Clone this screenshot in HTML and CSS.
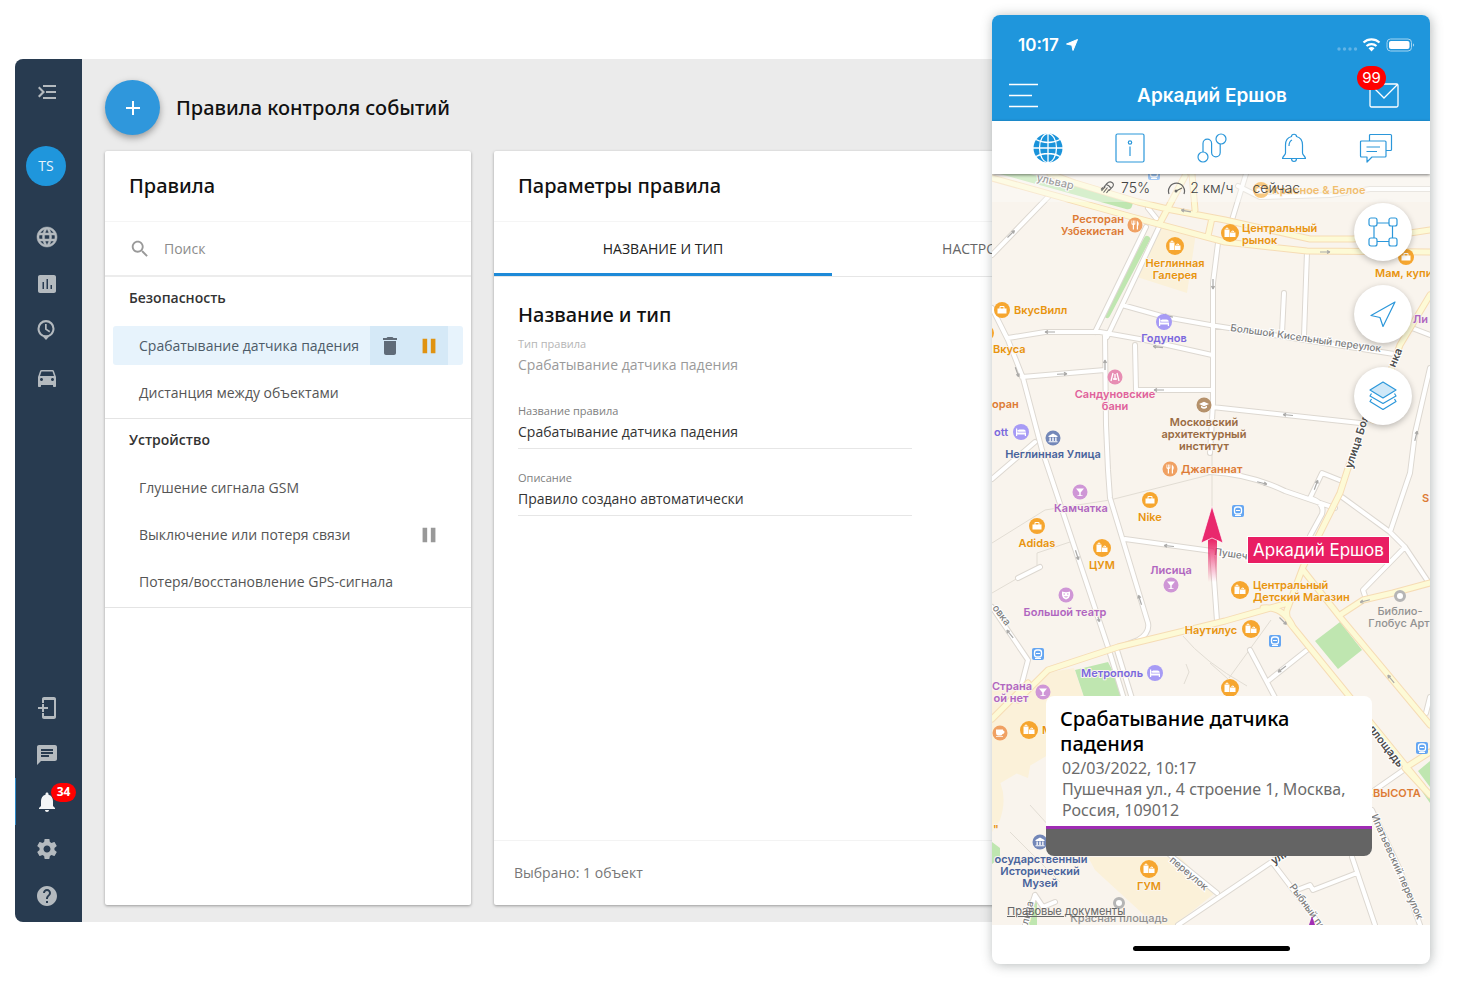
FILE: index.html
```html
<!DOCTYPE html>
<html lang="ru">
<head>
<meta charset="utf-8">
<meta name="viewport" content="width=device-width, initial-scale=1">
<title>Правила контроля событий</title>
<link rel="stylesheet" href="styles.css">
</head>
<body>
<div class="stage">
  <div class="window">
    <nav class="sidebar" aria-label="Главное меню">
      <button class="side-btn" aria-label="Развернуть меню"><svg viewBox="0 0 24 24"><path d="M8 5h13v2H8zM11 11h10v2H11zM8 17h13v2H8zM3 8l1.500-1.500L10 12l-5.500 5.500L3 16l4-4z"/></svg></button>
      <button class="avatar">TS</button>
      <button class="side-btn" aria-label="Карта"><svg viewBox="0 0 24 24"><path stroke="currentColor" stroke-width=".5" d="M11.990 2C6.470 2 2 6.480 2 12s4.470 10 9.990 10C17.520 22 22 17.520 22 12S17.520 2 11.990 2zm6.930 6h-2.950c-.32-1.250-.78-2.450-1.380-3.560 1.840.63 3.370 1.910 4.330 3.560zM12 4.040c.83 1.200 1.480 2.530 1.910 3.960h-3.820c.43-1.430 1.080-2.760 1.910-3.960zM4.260 14C4.100 13.360 4 12.690 4 12s.1-1.360.26-2h3.380c-.08.66-.14 1.320-.14 2s.06 1.340.14 2H4.260zm.82 2h2.950c.32 1.250.78 2.450 1.380 3.560-1.840-.63-3.370-1.900-4.330-3.560zm2.950-8H5.080c.96-1.660 2.490-2.930 4.330-3.560C8.810 5.550 8.350 6.750 8.030 8zM12 19.960c-.83-1.200-1.480-2.530-1.910-3.960h3.820c-.43 1.430-1.080 2.760-1.910 3.960zM14.340 14H9.660c-.09-.66-.16-1.320-.16-2s.07-1.350.16-2h4.680c.09.65.16 1.320.16 2s-.07 1.340-.16 2zm.25 5.560c.6-1.110 1.060-2.310 1.380-3.560h2.950c-.96 1.650-2.490 2.930-4.330 3.560zM16.360 14c.08-.66.14-1.320.14-2s-.06-1.340-.14-2h3.380c.16.64.26 1.310.26 2s-.1 1.360-.26 2h-3.380z"/></svg></button>
      <button class="side-btn" aria-label="Отчёты"><svg viewBox="0 0 24 24"><path d="M19 3H5c-1.100 0-2 .9-2 2v14c0 1.100.9 2 2 2h14c1.100 0 2-.9 2-2V5c0-1.100-.9-2-2-2zM9 17H7.500v-7H9v7zm4 0h-1.500V7H13v10zm4 0h-1.500v-4H17v4z"/></svg></button>
      <button class="side-btn" aria-label="История"><svg viewBox="0 0 24 24"><path fill-rule="evenodd" d="M11 1a8.500 8.500 0 0 0-8.500 8.500c0 4 2.300 7.200 5.500 8.300l3 3.200 3-3.200c3.200-1.100 5.500-4.300 5.500-8.300A8.500 8.500 0 0 0 11 1zm0 2.300a6.500 6.500 0 1 1 0 13 6.500 6.500 0 0 1 0-13zM10 5h1.700v4.800l3.500 2.300-.9 1.400L10 10.600z"/></svg></button>
      <button class="side-btn" aria-label="Автопарк"><svg viewBox="0 0 24 24"><path d="M18.920 5.010C18.720 4.420 18.160 4 17.500 4h-11c-.66 0-1.210.42-1.420 1.010L3 11v9c0 .55.45 1 1 1h1c.55 0 1-.45 1-1v-1h12v1c0 .55.45 1 1 1h1c.55 0 1-.45 1-1v-9l-2.080-5.990zM6.500 15c-.83 0-1.500-.67-1.500-1.500S5.670 12 6.500 12s1.500.67 1.500 1.500S7.330 15 6.500 15zm11 0c-.83 0-1.500-.67-1.500-1.500s.67-1.500 1.500-1.500 1.500.67 1.500 1.500-.67 1.500-1.500 1.500zM5 10l1.500-4.500h11L19 10H5z"/></svg></button>
      <span class="side-space"></span>
      <button class="side-btn" aria-label="Активация устройства"><svg viewBox="0 0 24 24"><path d="M19 1H9c-1.100 0-2 .9-2 2v4h2V4h10v16H9v-3H7v4c0 1.100.9 2 2 2h10c1.100 0 2-.9 2-2V3c0-1.100-.9-2-2-2zM7 8h2v3h4v2H9v3H7v-3H3v-2h4z"/></svg></button>
      <button class="side-btn" aria-label="Чаты"><svg viewBox="0 0 24 24"><path d="M20 2H4c-1.100 0-1.990.9-1.990 2L2 22l4-4h14c1.100 0 2-.9 2-2V4c0-1.100-.9-2-2-2zM6 9h12v2H6V9zm8 5H6v-2h8v2zm4-6H6V6h12v2z"/></svg></button>
      <button class="side-btn side-btn-active" aria-label="Уведомления"><svg viewBox="0 0 24 24"><path d="M12 22c1.100 0 2-.9 2-2h-4c0 1.100.89 2 2 2zm6-6v-5c0-3.070-1.640-5.640-4.500-6.320V4c0-.83-.67-1.500-1.500-1.500s-1.500.67-1.500 1.500v.68C7.630 5.360 6 7.920 6 11v5l-2 2v1h16v-1l-2-2z"/></svg><span class="badge">34</span></button>
      <button class="side-btn" aria-label="Настройки"><svg viewBox="0 0 24 24"><path d="M19.430 12.980c.04-.32.07-.64.07-.98s-.03-.66-.07-.98l2.110-1.650c.19-.15.24-.42.12-.64l-2-3.460c-.12-.22-.39-.3-.61-.22l-2.490 1c-.52-.4-1.080-.73-1.690-.98l-.38-2.650C14.460 2.180 14.250 2 14 2h-4c-.25 0-.46.18-.49.42l-.38 2.650c-.61.25-1.170.59-1.690.98l-2.490-1c-.23-.09-.49 0-.61.22l-2 3.460c-.13.22-.07.49.12.64l2.110 1.650c-.04.32-.07.65-.07.98s.03.66.07.98l-2.110 1.650c-.19.15-.24.42-.12.64l2 3.460c.12.22.39.3.61.22l2.490-1c.52.4 1.080.73 1.690.98l.38 2.650c.03.24.24.42.49.42h4c.25 0 .46-.18.49-.42l.38-2.650c.61-.25 1.170-.59 1.690-.98l2.490 1c.23.09.49 0 .61-.22l2-3.460c.12-.22.07-.49-.12-.64l-2.110-1.650zM12 15.500c-1.930 0-3.500-1.570-3.500-3.500s1.570-3.500 3.500-3.500 3.500 1.570 3.500 3.500-1.570 3.500-3.500 3.500z"/></svg></button>
      <button class="side-btn" aria-label="Помощь"><svg viewBox="0 0 24 24"><path d="M12 2C6.480 2 2 6.480 2 12s4.480 10 10 10 10-4.480 10-10S17.520 2 12 2zm1 17h-2v-2h2v2zm2.070-7.750l-.9.920C13.450 12.900 13 13.500 13 15h-2v-.5c0-1.100.45-2.100 1.170-2.830l1.240-1.260c.37-.36.59-.86.59-1.410 0-1.100-.9-2-2-2s-2 .9-2 2H8c0-2.210 1.790-4 4-4s4 1.790 4 4c0 .88-.36 1.680-.93 2.250z"/></svg></button>
    </nav>

    <main class="content">
      <header class="page-head">
        <button class="add" aria-label="Добавить правило"><svg viewBox="0 0 16 16"><path d="M7 1h2v6h6v2H9v6H7V9H1V7h6z"/></svg></button>
        <h1 class="title">Правила контроля событий</h1>
      </header>
      <div class="panels">
        <section class="card">
          <h2 class="title card-head">Правила</h2>
          <label class="search">
            <svg viewBox="0 0 24 24"><path d="M15.500 14h-.79l-.28-.27C15.410 12.590 16 11.110 16 9.500 16 5.910 13.090 3 9.500 3S3 5.910 3 9.500 5.910 16 9.500 16c1.610 0 3.090-.59 4.230-1.570l.27.28v.79l5 4.990L20.490 19l-4.990-5zm-6 0C7.010 14 5 11.990 5 9.500S7.010 5 9.500 5 14 7.010 14 9.500 11.990 14 9.500 14z"/></svg>
            <input type="text" placeholder="Поиск" aria-label="Поиск">
          </label>
          <div class="group">
            <h3 class="group-title">Безопасность</h3>
            <div class="rule rule-selected">
              <span class="rule-name">Срабатывание датчика падения</span>
              <span class="rule-actions">
                <button class="icon-btn" aria-label="Удалить"><svg viewBox="0 0 24 24"><path fill="#5f6b78" d="M6 19c0 1.100.9 2 2 2h8c1.100 0 2-.9 2-2V7H6v12zM19 4h-3.500l-1-1h-5l-1 1H5v2h14V4z"/></svg></button>
                <button class="icon-btn" aria-label="Приостановить"><svg viewBox="0 0 24 24"><path fill="#e09311" d="M5 4h5v16H5zm9 0h5v16h-5z"/></svg></button>
              </span>
            </div>
            <div class="rule"><span class="rule-name">Дистанция между объектами</span></div>
          </div>
          <div class="group">
            <h3 class="group-title">Устройство</h3>
            <div class="rule"><span class="rule-name">Глушение сигнала GSM</span></div>
            <div class="rule"><span class="rule-name">Выключение или потеря связи</span><span class="rule-state"><svg viewBox="0 0 24 24"><path fill="#999" d="M5 4h5v16H5zm9 0h5v16h-5z"/></svg></span></div>
            <div class="rule"><span class="rule-name">Потеря/восстановление GPS-сигнала</span></div>
          </div>
        </section>

        <section class="card">
          <h2 class="title card-head">Параметры правила</h2>
          <div class="tabs" role="tablist">
            <button class="tab tab-active" role="tab" aria-selected="true">НАЗВАНИЕ И ТИП</button>
            <button class="tab" role="tab" aria-selected="false">НАСТРОЙКИ ЗОН</button>
          </div>
          <form class="form">
            <h2 class="title form-title">Название и тип</h2>
            <label class="field field-off">Тип правила<input type="text" value="Срабатывание датчика падения" disabled></label>
            <label class="field">Название правила<input type="text" value="Срабатывание датчика падения"></label>
            <label class="field">Описание<input type="text" value="Правило создано автоматически"></label>
          </form>
          <footer class="card-foot">Выбрано: 1 объект</footer>
        </section>
      </div>
    </main>
  </div>

  <div class="phone">
    <header class="app-head">
      <div class="status">
        <span class="time">10:17</span>
        <svg class="loc" viewBox="0 0 12 12"><path fill="#fff" stroke="#fff" stroke-linejoin="round" d="M11.500.5 7 11.500 5.800 6.200.5 5z"/></svg>
        <svg class="signal" viewBox="0 0 80 18">
          <g fill="#62b4e6"><circle cx="3" cy="13" r="1.700"/><circle cx="8.500" cy="13" r="1.700"/><circle cx="14" cy="13" r="1.700"/><circle cx="19.500" cy="13" r="1.700"/></g>
          <g fill="none" stroke="#fff" stroke-width="2.200"><path d="M27.500 6.500a12 12 0 0 1 16 0M30.500 10a7.500 7.500 0 0 1 10 0"/></g>
          <path fill="#fff" d="M32.500 12.300a4.500 4.500 0 0 1 6 0L35.500 15.500z"/>
          <rect x="51" y="3" width="24.500" height="12" rx="3.500" fill="none" stroke="#a5d5f1"/><rect x="53" y="5" width="20.500" height="8" rx="2" fill="#fff"/><path d="M77 7.500c1.500.5 1.500 2.500 0 3z" fill="#a5d5f1"/>
        </svg>
      </div>
      <div class="app-bar">
        <button class="bar-btn" aria-label="Меню"><svg width="30" height="26" viewBox="0 0 30 26"><path d="M0 1.500h29M0 12.500h23M0 23.500h29" stroke="#fff" stroke-width="1.300"/></svg></button>
        <h2 class="app-title">Аркадий Ершов</h2>
        <button class="bar-btn" aria-label="Сообщения"><svg width="30" height="26" viewBox="0 0 30 26"><g fill="none" stroke="#fff" stroke-width="1.300"><rect x="1" y="1" width="28" height="23" rx="1.500"/><path d="M1.500 1.500 15 15 28.500 1.500"/></g></svg><span class="bar-badge">99</span></button>
      </div>
    </header>
    <nav class="app-tabs" aria-label="Разделы">
      <button aria-label="Карта"><svg viewBox="0 0 34 30"><circle cx="17" cy="15" r="14.500" fill="#1a93da"/><g fill="none" stroke="#fff" stroke-width="1.300"><path d="M17 0v30M2 15h30M5 6.500c7 4 17 4 24 0M5 23.500c7-4 17-4 24 0"/><ellipse cx="17" cy="15" rx="8.500" ry="14.500"/></g></svg></button>
      <button aria-label="Информация"><svg viewBox="0 0 34 30" class="line"><rect x="3" y="1" width="28" height="28" rx="1.500"/><circle cx="17" cy="9.500" r="1.700"/><path d="M17 13.500V23"/></svg></button>
      <button aria-label="Маршрут"><svg viewBox="0 0 34 30" class="line"><circle cx="8" cy="24" r="5"/><circle cx="26" cy="6" r="5"/><path d="M8 19v-8.500a4.300 4.300 0 0 1 8.600 0v9a4.300 4.300 0 0 0 8.600 0V11"/></svg></button>
      <button aria-label="События"><svg viewBox="0 0 34 30" class="line"><path d="M14.500 3.500c0-3 5-3 5 0 4 1 6 4.500 6 8.500v8c0 2 3 3.500 3 5.500h-23c0-2 3-3.500 3-5.500v-8c0-4 2-7.500 6-8.500zM14.500 25.500c0 4 5 4 5 0M12 13c0-3 1-5 3-6"/></svg></button>
      <button aria-label="Чаты"><svg viewBox="0 0 34 30" class="line"><path d="M10.500 8V2.500a1 1 0 0 1 1-1h20a1 1 0 0 1 1 1v14a1 1 0 0 1-1 1H27M2.500 8h23.500a1 1 0 0 1 1 1v14a1 1 0 0 1-1 1H13l-5 5v-5H2.500a1 1 0 0 1-1-1V9a1 1 0 0 1 1-1zM7.500 14H21M7.500 18.500H18"/></svg></button>
    </nav>

    <div class="map">
      <svg class="map-canvas" viewBox="992 174 438 751" preserveAspectRatio="xMidYMid slice">
        <defs>
          <linearGradient id="tail" x1="0" y1="0" x2="0" y2="1"><stop offset="0" stop-color="#e91e63"/><stop offset="1" stop-color="#e91e63" stop-opacity="0"/></linearGradient>
          <g id="white-roads">
            <path d="M1146 227 1095 332M1160 225 1107 337M1105 335l1 90 2 45 2 28 38 125q2 10-10 17l-18 7M992 308l16 32 15 38 19 72 66 197 24 78M1117 650l17 55M1008 338l37-6h55l45 8 67 15M1022 377l83-7M1122 305l43 12 45 8 184 29M1218 243l-5 40v120l-3 50M1212 551l5 70M1135 345l1 45h76M1212 407l148 16M1307 252l-3 84M1284 293l-2 40M992 255l58-60M1125 539l87 12M1210 472q40 2 75 19l50 17M1310 498l12-25 20 8M1310 498q15 5 12 16l-12 22M1342 497l48 35 15 15 24 36M1405 547l-42 43 3 9M1390 532l20-59 5-40 15-65M1412 328l18 7M992 607l36 53-6 23M1035 442l-43 37M1018 578l22-11M1307 650l-39 31M1250 650l30 57M1178 925l95-64 132-92M1272 862l48 63M1297 890l13-5 3 5 44-17M1352 857l23 68M1372 810l28 60 20 55M1170 855l47 38M1035 895l-10 30M1035 895l8 12 12-5M1430 697l-4 16M1246 174l-14 46M1148 208l12 15M1238 186l22 11 70-2 40-6h60"/>
          </g>
          <g id="yellow-roads">
            <path d="M1018 700l30-30 70-23 107-26 63-18M1028 683l-36 36M1350 462l-10 31-37 74-16 43q-2 8 6 17l130 160M1263 608q20-2 30 19M1303 570l37 47 90 108M1430 583l-37 10-30 7-23 15M1430 295l-30 50-27 75M1405 768l25-16M1405 768l25 27M992 178l140 39 93 25 82 9 123 1M1050 174l25 9 63 19 34 8 53 10 85 19h43l57-6 20-3M1185 176l-25 47M1192 174l3 36M1212 218l-4 18"/>
          </g>
          <g id="bag"><circle r="8"/><path fill="#fff" d="M-4.500-1.500h9v5h-9zM-2.500-1.500v-1.500a1 1 0 0 1 1-1h3a1 1 0 0 1 1 1v1.500h-1V-3h-3v1.500z"/></g>
          <g id="mall"><circle r="9"/><path fill="#fff" d="M-5.500-3.500h5V4h-5zM0-.5h5.500V4H0zM-4.500-4a1.500 1.500 0 0 1 3 0h-1a.5.5 0 0 0-1 0zM1.200-1a1.500 1.500 0 0 1 3 0h-1a.5.5 0 0 0-1 0z"/></g>
          <g id="bed"><circle r="8"/><path fill="#fff" d="M-5-3.500h1.200V.5h8.800V4H3.800V2.500h-7.600V4H-5zM-2-.3v-2.200h4.500A2.300 2.300 0 0 1 4.800-.3z"/><circle cx="-2.700" cy="-1.200" r="1" fill="#fff"/></g>
          <g id="fork"><circle r="7.500"/><path fill="#fff" d="M-3.500-4.500h.8v3h.7v-3h.8v3h.7v-3h.8v3.800l-1.300.8V4.500h-1.200V.1l-1.300-.8zM2-4.500q2 1.500 1.500 5H3v4H1.800v-8z"/></g>
          <g id="drink"><circle r="7.500"/><path fill="#fff" d="M-4-3.500h8L.7.500v2.700h1.800V4h-5v-.8h1.800V.5z"/></g>
          <g id="bank"><circle r="7.500"/><path fill="#fff" d="M0-4.500 4.500-2v1h-9v-1zM-3.500-.5h1.300V3h-1.300zM-.7-.5H.7V3H-.7zM2.200-.5h1.300V3H2.200zM-4.500 3.200h9v1h-9z"/></g>
          <g id="cap"><circle r="7.500"/><path fill="#fff" d="m-5-1 5-2.300L5-1 0 1.300zM-3 .8 0 2.200 3 .8V2.500Q0 5-3 2.500z"/></g>
          <g id="mask"><circle r="7.500"/><path fill="#fff" d="M-4-3.500q4 1.500 8 0V0Q3.500 3.500 0 4.500-3.500 3.500-4 0z"/><path d="M-2.500-1h1.500M1-1h1.500M-1.500 1.500Q0 2.700 1.500 1.500" stroke="#cf96d6" fill="none"/></g>
          <g id="cup"><circle r="7.500"/><path fill="#fff" d="M-4-3.500h7v1q1.800 0 1.500 1.800T2.500 1Q2 2.500.5 2.500h-2.500Q-4 2-4 0zM-4 3.200h7v.9h-7z"/></g>
          <g id="metro"><rect x="-6" y="-6" width="12" height="12" rx="2" fill="#65a6f2"/><rect x="-3.500" y="-4" width="7" height="7" rx="2.500" fill="none" stroke="#fff" stroke-width="1.300"/><path d="M-2-.5h4M-3 4.500h6" stroke="#fff" stroke-width="1.200"/></g>
          <g id="ring"><circle r="4.500" fill="#fff" stroke="#b5b5b5" stroke-width="3"/></g>
          <path id="way" d="M-5 0H5M-5 0l3-1.500M-5 0l3 1.500" fill="none" stroke="#aaa9a7" stroke-width="1.200"/>
        </defs>
        <rect x="992" y="174" width="438" height="751" fill="#f9f4ed"/>
        <g fill="#fbf1d9">
          <path d="m1160 225 36 8-9 60-50-16zM1046 673l28-5 20 60-102 60v-70zM1028 778l-20-8-16-20v-60l54-10zM992 770q18 20 8 50l-8 12zM1088 857h92l35 36-40 32h-20l-60-55z"/>
        </g>
        <g fill="#bfe6b0">
          <path d="M1000 174h30l99 26q5 2 3 6-1 4-6 3zM1075 670l33-8 20 38h-43zM1340 622l22 28-24 19-23-28zM1430 761l-12 10 12 16zM1414 780l16 23v-12zM992 842l8 6v10l-8 6zM1037 900h-8l-4 25h12z"/>
          <path d="m1147 239-40 76" stroke="#bfe6b0" stroke-width="6" stroke-linecap="round"/>
        </g>
        <g fill="none" stroke="#e2ddd4" stroke-width="1">
          <path d="m992 543 53-33 65-10 103-26M1070 542l-33 11v14l-45 26M1183 636q20 25 64 50M1210 663l18 16M1271 620l-42 58M1212 450v60M1010 832l50 50M1030 805l20 22M1186 664l3 8-5 12"/>
        </g>
        <use href="#white-roads" class="road white-case"/><use href="#white-roads" class="road white"/>
        <use href="#yellow-roads" class="road yellow-case"/><use href="#yellow-roads" class="road yellow"/>

        <use href="#way" transform="translate(1050 332)"/><use href="#way" transform="translate(1062 374) rotate(177)"/><use href="#way" transform="translate(1017 372) rotate(250)"/><use href="#way" transform="translate(1105 365) rotate(90)"/><use href="#way" transform="translate(1158 347) rotate(8)"/><use href="#way" transform="translate(1159 390)"/><use href="#way" transform="translate(1168 316) rotate(12)"/><use href="#way" transform="translate(1213 284) rotate(-90)"/><use href="#way" transform="translate(1186 211) rotate(10)"/><use href="#way" transform="translate(1325 252) rotate(180)"/><use href="#way" transform="translate(1288 415) rotate(6)"/><use href="#way" transform="translate(1011 234) rotate(135)"/><use href="#way" transform="translate(1077 555) rotate(252)"/><use href="#way" transform="translate(1098 617) rotate(252)"/><use href="#way" transform="translate(1169 546) rotate(6)"/><use href="#way" transform="translate(1140 600) rotate(72)"/><use href="#way" transform="translate(1010 634) rotate(50)"/><use href="#way" transform="translate(1262 483) rotate(195)"/><use href="#way" transform="translate(1316 485) rotate(110)"/><use href="#way" transform="translate(1283 621) rotate(225)"/><use href="#way" transform="translate(1365 601) rotate(-15)"/><use href="#way" transform="translate(1282 669) rotate(-38)"/><use href="#way" transform="translate(1391 679) rotate(50)"/><use href="#way" transform="translate(1416 436) rotate(104)"/>

        <g fill="#f6a62f"><use href="#mall" x="1175" y="246"/><use href="#bag" x="1002" y="310"/><use href="#mall" x="1230" y="233"/><use href="#bag" x="1406" y="257"/><use href="#bag" x="1150" y="500"/><use href="#bag" x="1037" y="526"/><use href="#mall" x="1102" y="548"/><use href="#mall" x="1240" y="590"/><use href="#mall" x="1251" y="629"/><use href="#mall" x="1230" y="688"/><use href="#mall" x="1029" y="730"/><use href="#mall" x="1149" y="869"/><use href="#bag" x="1261" y="190"/><use href="#bag" x="986" y="333"/></g>
        <g fill="#f0a163"><use href="#fork" x="1135" y="225"/><use href="#fork" x="1170" y="469"/><use href="#cup" x="1000" y="733"/></g>
        <g fill="#a79bf5"><use href="#bed" x="1164" y="322"/><use href="#bed" x="1021" y="432"/><use href="#bed" x="1155" y="673"/></g>
        <g fill="#cf96d6"><use href="#drink" x="1080" y="492"/><use href="#drink" x="1171" y="585"/><use href="#mask" x="1066" y="595"/><use href="#drink" x="1043" y="692"/></g>
        <g fill="#7387b8"><use href="#bank" x="1053" y="438"/><use href="#bank" x="1040" y="842"/></g>
        <use href="#cap" x="1204" y="405" fill="#b5916b"/>
        <circle cx="1115" cy="377" r="7.500" fill="#e78db3"/><path d="m1113 373-2 8M1115 374v6M1117 373l2 8M1113 379h4" stroke="#fff" stroke-width="1.300"/>
        <use href="#metro" x="1154" y="174"/><use href="#metro" x="1238" y="511"/><use href="#metro" x="1038" y="654"/><use href="#metro" x="1275" y="641"/><use href="#metro" x="1422" y="748"/>
        <use href="#ring" x="1400" y="596"/><use href="#ring" x="1119" y="903"/>

        <g class="place orange" text-anchor="end"><text x="1124" y="223">Ресторан</text><text x="1124" y="235">Узбекистан</text></g>
        <g class="place amber" text-anchor="middle"><text x="1175" y="267">Неглинная</text><text x="1175" y="279">Галерея</text><text x="1150" y="521">Nike</text><text x="1037" y="547">Adidas</text><text x="1102" y="569">ЦУМ</text><text x="1149" y="890">ГУМ</text><text x="1211" y="634">Наутилус</text></g>
        <g class="place amber"><text x="1014" y="314">ВкусВилл</text><text x="993" y="353">Вкуса</text><text x="1242" y="232">Центральный</text><text x="1242" y="244">рынок</text><text x="1375" y="277">Мам, купи</text><text x="1253" y="589">Центральный</text><text x="1253" y="601">Детский Магазин</text><text x="1042" y="734">М</text><text x="993" y="833">"</text><text x="1272" y="194">Красное &amp; Белое</text></g>
        <g class="place orange"><text x="1181" y="473">Джаганнат</text><text x="992" y="408">оран</text><text x="1422" y="502">S</text><text x="1373" y="797">ВЫСОТА</text></g>
        <g class="place violet" text-anchor="middle"><text x="1164" y="342">Годунов</text><text x="1112" y="677">Метрополь</text><text x="1001" y="436">ott</text></g>
        <g class="place pink" text-anchor="middle"><text x="1115" y="398">Сандуновские</text><text x="1115" y="410">бани</text></g>
        <g class="place brown" text-anchor="middle"><text x="1204" y="426">Московский</text><text x="1204" y="438">архитектурный</text><text x="1204" y="450">институт</text></g>
        <g class="place navy" text-anchor="middle"><text x="1053" y="458">Неглинная Улица</text><text x="1041" y="863">осударственный</text><text x="1040" y="875">Исторический</text><text x="1040" y="887">Музей</text></g>
        <g class="place purple" text-anchor="middle"><text x="1081" y="512">Камчатка</text><text x="1171" y="574">Лисица</text><text x="1065" y="616">Большой театр</text><text x="1012" y="690">Страна</text><text x="1011" y="702">ой нет</text></g>
        <text class="place purple" x="1413" y="323">Ли</text>
        <g class="place grey" text-anchor="middle"><text x="1400" y="615">Библио-</text><text x="1399" y="627">Глобус Арт</text><text x="1119" y="922">Красная площадь</text></g>
        <g class="street">
          <text class="street-bold" transform="translate(1036 181) rotate(13)">ульвар</text>
          <text transform="translate(1230 331) rotate(8)">Большой Кисельный переулок</text>
          <text transform="translate(1214 555) rotate(8)">Пушечная</text>
          <text transform="translate(992 608) rotate(53)">овка</text>
          <text transform="translate(1169 861) rotate(40)">переулок</text>
          <text transform="translate(1289 887) rotate(54)">Рыбный пер.</text>
          <text transform="translate(1371 816) rotate(66)">Ипатьевский переулок</text>
          <text transform="translate(1028 925) rotate(-76)">лица</text>
        </g>
        <g class="street street-dark">
          <text transform="translate(1352 469) rotate(-72)">улица Большая</text>
          <text transform="translate(1395 368) rotate(-67)">нка</text>
          <text transform="translate(1368 729) rotate(52)">площадь</text>
          <text transform="translate(1274 865) rotate(-33)">улица</text>
        </g>
        <path d="M1208 538h9v44h-9z" fill="url(#tail)"/>
        <path d="m1212 506-11 37 11-5 11 5z" fill="#e9286d" stroke="#fff" stroke-width=".7"/>
        <path d="m1312 916 3 9h-6z" fill="#a22fb5"/>
      </svg>
      <div class="telemetry">
        <svg width="14" height="14" viewBox="0 0 14 14"><path d="M3.500 6.500 7 2.500q2.500-2.500 5-1t.5 4.500L9 9.500M6 3.500q3 .5 5 4M5.500 5.500l-4 4.500M7.500 6.500l-4 5M9 8.500 6.500 12M1 8.500 3 6.500" fill="none" stroke="#666" stroke-width="1.100"/></svg>
        <span>75%</span>
        <svg class="gauge" width="19" height="14" viewBox="0 0 19 14"><path d="M2 13A8 8 0 1 1 17 13M9 10l6-3" fill="none" stroke="#666" stroke-width="1.200"/><circle cx="9" cy="10" r="1.500" fill="#666"/></svg>
        <span>2 км/ч</span>
        <span class="when">сейчас</span>
      </div>
      <div class="map-tools">
        <button aria-label="Геозоны"><svg viewBox="0 0 30 30" class="line"><path d="M9 6h12M6 9v12M24.500 9v12M9 24.500h12"/><rect x="1" y="1" width="8" height="8" rx="2"/><rect x="21" y="1" width="8" height="8" rx="2"/><rect x="1" y="21" width="8" height="8" rx="2"/><rect x="21" y="21" width="8" height="8" rx="2"/></svg></button>
        <button aria-label="Моё местоположение"><svg viewBox="0 0 30 30" class="line"><path d="M27 3 3 16.500l9 2 3 9z"/></svg></button>
        <button aria-label="Слои"><svg viewBox="0 0 30 30" class="line"><path d="m3.500 18-1.500 2.500 13 8 13-8-1.500-2.500M3.500 12.500 2 15l13 7.500L28 15l-1.500-2.500"/><path fill="#cfe8f8" d="m15 1 13 8-13 8L2 9z"/></svg></button>
      </div>
      <span class="pin-label">Аркадий Ершов</span>
      <article class="popup">
        <h3>Срабатывание датчика падения</h3>
        <p>02/03/2022, 10:17<br>Пушечная ул., 4 строение 1, Москва, Россия, 109012</p>
        <div class="popup-bar"></div>
      </article>
      <a class="legal" href="#">Правовые документы</a>
    </div>
    <div class="home"><span></span></div>
  </div>
</div>
</body>
</html>
```
FILE: styles.css
```css
* { box-sizing: border-box; }
body { margin: 0; background: #fff; font-family: "Open Sans", "Noto Sans", sans-serif; font-size: 14px; line-height: 20px; color: #111; }
button, input { font: inherit; color: inherit; border: 0; background: none; padding: 0; margin: 0; }
button { cursor: pointer; }
h1, h2, h3, p { margin: 0; }
svg { display: block; }

.stage { display: flex; align-items: flex-start; padding: 15px 30px 17px 15px; }

.window { flex: 1; min-width: 0; display: flex; min-height: 863px; margin-top: 44px; background: #ebebeb; border-radius: 8px; overflow: hidden; }
.sidebar { flex: none; width: 67px; display: flex; flex-direction: column; padding: 9px 0 3px; background: #283b50; color: #b4babf; }
.side-btn { position: relative; height: 47px; padding-right: 4px; display: flex; align-items: center; justify-content: center; }
.side-btn svg { width: 24px; height: 24px; fill: currentColor; }
.side-btn-active { color: #f4f6f7; box-shadow: inset 1px 0 #2b86c4; }
.badge { position: absolute; left: 36px; top: 5px; width: 25px; height: 19px; border-radius: 10px; background: #f00; color: #fff; font-size: 12px; font-weight: 700; line-height: 18px; text-align: center; }
.avatar { width: 40px; height: 40px; margin: 31px 0 27px 11px; border-radius: 50%; background: #1f96dc; color: #e8f4fc; }
.side-space { flex: 1; }

.content { flex: 1; min-width: 0; display: flex; flex-direction: column; padding: 21px 24px 17px 23px; }
.page-head { display: flex; align-items: center; gap: 16px; margin-bottom: 16px; }
.add { width: 55px; height: 55px; border-radius: 50%; background: #2f97dc; display: grid; place-items: center; box-shadow: 0 3px 7px rgba(0,0,0,.35); }
.add svg { width: 16px; height: 16px; fill: #fff; }
.title { font-family: "Noto Sans", "Open Sans", sans-serif; font-size: 20px; font-weight: 500; line-height: 28px; }
.panels { flex: 1; display: grid; grid-template-columns: 366px minmax(0, 1fr); gap: 23px; }
.card { display: flex; flex-direction: column; background: #fff; border-radius: 2px; box-shadow: 0 1px 3px rgba(0,0,0,.35); }
.card-head { height: 71px; padding: 21px 24px; border-bottom: 1px solid #f5f5f5; }
.search { display: flex; align-items: center; gap: 13px; height: 55px; padding: 0 24px; border-bottom: 2px solid #ececec; }
.search svg { width: 22px; height: 22px; fill: #999; }
.search input { flex: 1; min-width: 0; outline: 0; }
.search input::placeholder { color: #8c8c8c; opacity: 1; }
.group { padding-bottom: 2px; border-bottom: 1px solid #e4e4e4; }
.group-title { height: 44px; padding: 11px 24px; font-size: 14px; font-weight: 600; line-height: 20px; color: #333; }
.rule { display: flex; align-items: center; height: 39px; margin: 0 8px 8px; padding: 0 15px 0 26px; border-radius: 3px; color: #555; }
.group-title + .rule { margin-top: 5px; }
.rule:last-child { margin-bottom: 4px; }
.rule-name { flex: 1; white-space: nowrap; }
.rule-selected { background: #e7f3fc; color: #4d5b68; }
.rule-actions { display: flex; height: 39px; background: #d5e9f7; }
.icon-btn { width: 39px; display: grid; place-items: center; }
.icon-btn svg { width: 24px; height: 24px; }
.icon-btn + .icon-btn svg, .rule-state svg { width: 22px; height: 22px; }
.rule-state { padding-right: 8px; }

.tabs { display: grid; grid-template-columns: 1fr 1fr; height: 55px; border-bottom: 1px solid #e6e6e6; }
.tab { height: 54px; font-weight: 500; color: #666; }
.tab-active { color: #222; border-bottom: 3px solid #1d8ad8; padding-top: 2px; }
.form { flex: 1; padding: 24px 24px; max-width: 442px; }
.form-title { margin-bottom: 7px; }
.field { display: flex; flex-direction: column; height: 46px; margin-bottom: 21px; border-bottom: 1px solid #e6e6e6; font-size: 11px; line-height: 16px; color: #808080; }
.field input { height: 24px; font-size: 14px; color: #333; outline: 0; }
.field-off { border-bottom-color: transparent; color: #b5b5b5; }
.field-off input { color: #9a9a9a; }
.card-foot { height: 65px; padding: 22px 20px; border-top: 1px solid #f3f3f3; color: #777; }

.phone { position: relative; flex: none; width: 438px; margin-left: -202px; display: flex; flex-direction: column; background: #fff; border-radius: 8px; overflow: hidden; box-shadow: 1px 1px 12px rgba(90,100,100,.45); font-family: Inter, "Noto Sans", sans-serif; }
.app-head { background: #1f96dc; color: #fff; }
.status { display: flex; align-items: center; height: 58px; padding: 2px 14px 0 26px; font-size: 17px; font-weight: 600; }
.loc { width: 12px; height: 12px; margin-left: 7px; }
.signal { width: 80px; height: 18px; margin-left: auto; }
.app-bar { display: flex; align-items: center; justify-content: space-between; height: 48px; padding: 0 31px 3px 17px; }
.bar-btn { position: relative; }
.bar-badge { position: absolute; left: -12px; top: -17px; width: 29px; height: 24px; border-radius: 12px; background: #f00; font-size: 15px; line-height: 24px; text-align: center; color: #fff; }
.app-title { margin-left: 16px; font-size: 19px; font-weight: 600; line-height: 24px; }
.app-tabs { position: relative; z-index: 1; display: grid; grid-template-columns: repeat(5, 1fr); height: 53px; padding: 0 13px 0 15px; background: #fff; box-shadow: 0 1px 3px rgba(0,0,0,.5); }
.app-tabs button { display: grid; place-items: center; }
.app-tabs svg { width: 34px; height: 30px; }
.line { fill: none; stroke: #2b97da; stroke-width: 1.2; stroke-linejoin: round; }

.map { position: relative; height: 751px; overflow: hidden; background: #f9f4ed; }
.map-canvas { width: 100%; height: 100%; }
.road { fill: none; stroke-linejoin: round; stroke-linecap: round; }
.white-case { stroke: #ddd8d1; stroke-width: 6px; }
.white { stroke: #fff; stroke-width: 4px; }
.yellow-case { stroke: #f6dcb5; stroke-width: 7px; }
.yellow { stroke: #fdfad6; stroke-width: 5px; }
.place { font-size: 11px; font-weight: 600; paint-order: stroke; stroke: #f9f4ed; stroke-width: 2px; stroke-linejoin: round; }
.orange { fill: #dd7b35; }
.amber { fill: #e8940f; }
.violet { fill: #7a68dd; }
.pink { fill: #e0619b; }
.brown { fill: #996b43; }
.navy { fill: #48639c; }
.purple { fill: #b066c0; }
.grey { fill: #929292; font-weight: 500; }
.street { font-size: 10px; font-weight: 500; fill: #7d7d7d; paint-order: stroke; stroke: #fff; stroke-width: 2px; }
.street-bold { font-size: 11px; fill: #5f5f5f; }
.street-dark { font-size: 11px; font-weight: 600; fill: #4d4d4d; }

.telemetry { position: absolute; inset: 0 0 auto 0; display: flex; align-items: center; gap: 7px; height: 28px; padding-left: 108px; background: rgba(253,252,249,.4); font-size: 14px; font-weight: 300; color: #444; }
.gauge { margin-left: 10px; }
.telemetry .gauge + span { margin-left: -3px; }
.when { margin-left: 12px; }
.map-tools { position: absolute; top: 29px; right: 18px; display: flex; flex-direction: column; gap: 24px; }
.map-tools button { width: 58px; height: 58px; border-radius: 50%; background: #fff; display: grid; place-items: center; box-shadow: 0 2px 6px rgba(0,0,0,.25); }
.map-tools svg { width: 30px; height: 30px; }
.pin-label { position: absolute; left: 255px; top: 362px; padding: 0 5px; border: 1px solid #fff; background: #e91e63; color: #fff; font-size: 17px; line-height: 26px; }
.popup { position: absolute; left: 54px; right: 58px; bottom: 69px; border-radius: 8px; background: #fff; overflow: hidden; font-family: "Noto Sans", "Open Sans", sans-serif; }
.popup h3 { padding: 10px 14px 2px; font-size: 20px; font-weight: 500; line-height: 25px; color: #000; }
.popup p { padding: 0 14px 5px 16px; font-size: 16px; line-height: 21px; color: #6b6b6b; }
.popup-bar { height: 30px; border-top: 3px solid #9f2cb4; background: #646464; }
.legal { position: absolute; left: 15px; bottom: 4px; font-size: 11px; line-height: 20px; color: #666; }
.home { display: grid; place-items: center; height: 39px; }
.home span { width: 157px; height: 5px; margin-top: 8px; border-radius: 3px; background: #000; }
```
